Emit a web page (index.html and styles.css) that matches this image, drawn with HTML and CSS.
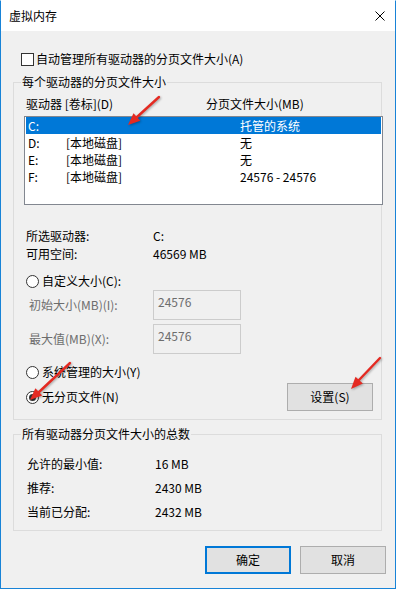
FILE: index.html
```html
<!DOCTYPE html>
<html lang="zh-CN">
<head>
    <meta charset="UTF-8">
    <meta name="viewport" content="width=device-width, initial-scale=1.0">
    <title>虚拟内存</title>
    <link rel="stylesheet" href="styles.css">
</head>
<body>

    <div class="window">
        <!-- Title bar -->
        <div class="titlebar">
            <span class="title">虚拟内存</span>
            <svg class="close" width="10" height="10" viewBox="0 0 10 10">
                <path d="M0.5 0.5 L9.5 9.5 M9.5 0.5 L0.5 9.5" stroke="#000" stroke-width="1" fill="none"/>
            </svg>
        </div>

        <div class="dialog">
            <div class="check-row">
                <span class="checkbox"></span>
                <span>自动管理所有驱动器的分页文件大小(A)</span>
            </div>

            <!-- Per drive -->
            <div class="group drives">
                <div class="group-title">每个驱动器的分页文件大小</div>
                <div class="list-head">
                    <span class="col-drive">驱动器 [卷标](D)</span>
                    <span>分页文件大小(MB)</span>
                </div>
                <div class="listbox">
                    <div class="row selected"><span class="c1">C:</span><span class="c2"></span><span>托管的系统</span></div>
                    <div class="row"><span class="c1">D:</span><span class="c2">[本地磁盘]</span><span>无</span></div>
                    <div class="row"><span class="c1">E:</span><span class="c2">[本地磁盘]</span><span>无</span></div>
                    <div class="row"><span class="c1">F:</span><span class="c2">[本地磁盘]</span><span>24576 - 24576</span></div>
                </div>

                <div class="info">
                    <div class="info-row"><span class="key">所选驱动器:</span><span>C:</span></div>
                    <div class="info-row"><span class="key">可用空间:</span><span>46569 MB</span></div>
                </div>

                <div class="radio-row custom">
                    <span class="radio"></span>
                    <span>自定义大小(C):</span>
                </div>
                <div class="field-row first">
                    <span class="field-label">初始大小(MB)(I):</span>
                    <div class="textbox">24576</div>
                </div>
                <div class="field-row">
                    <span class="field-label">最大值(MB)(X):</span>
                    <div class="textbox">24576</div>
                </div>

                <div class="bottom-row">
                    <div class="radios">
                        <div class="radio-row">
                            <span class="radio"></span>
                            <span>系统管理的大小(Y)</span>
                        </div>
                        <div class="radio-row second">
                            <span class="radio checked"></span>
                            <span>无分页文件(N)</span>
                        </div>
                    </div>
                    <button class="btn set-btn">设置(S)</button>
                </div>
            </div>

            <!-- Totals -->
            <div class="group totals">
                <div class="group-title">所有驱动器分页文件大小的总数</div>
                <div class="total-rows">
                    <div class="total-row"><span class="key">允许的最小值:</span><span>16 MB</span></div>
                    <div class="total-row"><span class="key">推荐:</span><span>2430 MB</span></div>
                    <div class="total-row"><span class="key">当前已分配:</span><span>2432 MB</span></div>
                </div>
            </div>

            <div class="footer">
                <button class="btn default">确定</button>
                <button class="btn">取消</button>
            </div>
        </div>

        <!-- Red annotation arrows -->
        <svg class="arrows" width="396" height="589" viewBox="0 0 396 589">
            <g stroke="#e42a22" stroke-width="2.4" stroke-linecap="round" fill="none">
                <line x1="159" y1="97" x2="137" y2="117"/>
                <line x1="70" y1="363" x2="39" y2="392"/>
                <line x1="380" y1="358" x2="359" y2="380"/>
            </g>
            <g fill="#e42a22">
                <polygon points="128,125 140.3,120.7 133.5,113.3"/>
                <polygon points="30,400 42.2,395.5 35.4,388.2"/>
                <polygon points="351,389 362.9,383.6 355.5,376.8"/>
            </g>
        </svg>
    </div>

</body>
</html>
```

FILE: styles.css
```css
/* General */
body {
    margin: 0;
    font-family: "Microsoft YaHei UI", "Noto Sans CJK SC", sans-serif;
    font-size: 12px;
    line-height: 16px;
    color: #000;
    background: #fff;
}
.window {
    position: relative;
    width: 396px;
    height: 589px;
    box-sizing: border-box;
    border: 1px solid #1883d7;
    border-top-color: #fff;
    background: #f0f0f0;
    display: flex;
    flex-direction: column;
}

/* Title bar */
.titlebar {
    height: 30px;
    flex-shrink: 0;
    background: #fff;
    display: flex;
    align-items: center;
}
.title {
    padding-left: 8px;
    line-height: 30px;
}
.close {
    margin-left: auto;
    margin-right: 10px;
}

/* Dialog body */
.dialog {
    flex: 1;
    padding-top: 20px;
}
.check-row {
    display: flex;
    align-items: center;
    height: 16px;
    padding-left: 20px;
}
.checkbox {
    width: 13px;
    height: 13px;
    box-sizing: border-box;
    border: 1px solid #333;
    background: #fff;
    margin-right: 2px;
}

/* Group boxes */
.group {
    border: 1px solid #dcdcdc;
    margin: 15px 13px 0 12px;
    padding: 0 0 8px 10px;
}
.group-title {
    width: max-content;
    height: 16px;
    margin: -9px 0 0 -3px;
    padding: 0 1px;
    background: #f0f0f0;
}
.totals {
    margin-top: 14px;
    padding-bottom: 6px;
}

/* Drive list */
.list-head {
    display: flex;
    margin-top: 6px;
    padding-left: 2px;
}
.col-drive {
    width: 180px;
}
.listbox {
    margin-top: 4px;
    margin-right: -2px;
    height: 89px;
    box-sizing: border-box;
    border: 1px solid #828790;
    background: #fff;
    padding: 0 1px;
}
.row {
    display: flex;
    height: 17px;
    line-height: 17px;
    padding-left: 2px;
}
.row.selected {
    background: #0078d7;
    color: #fff;
}
.c1 {
    width: 38px;
}
.c2 {
    width: 174px;
}

/* Selected drive info */
.info {
    margin-top: 22px;
}
.info-row {
    display: flex;
    height: 18px;
    line-height: 18px;
    padding-left: 2px;
}
.info-row .key {
    width: 127px;
}

/* Radios */
.radio-row {
    display: flex;
    align-items: center;
    height: 16px;
    padding-left: 2px;
}
.radio-row.custom {
    margin-top: 10px;
}
.radio-row.second {
    margin-top: 9px;
}
.radio {
    position: relative;
    width: 13px;
    height: 13px;
    box-sizing: border-box;
    border: 1px solid #333;
    border-radius: 50%;
    background: #fff;
    margin-right: 3px;
}
.radio.checked::after {
    content: "";
    position: absolute;
    left: 2px;
    top: 2px;
    width: 7px;
    height: 7px;
    border-radius: 50%;
    background: #333;
}

/* Disabled fields */
.field-row {
    display: flex;
    align-items: center;
    margin-top: 4px;
    padding-left: 5px;
    color: #6d6d6d;
}
.field-row.first {
    margin-top: 1px;
}
.field-label {
    width: 124px;
}
.textbox {
    width: 88px;
    height: 30px;
    box-sizing: border-box;
    border: 1px solid #cccccc;
    padding: 3px 0 0 4px;
}

.bottom-row {
    display: flex;
    justify-content: space-between;
    align-items: flex-start;
    margin-top: 10px;
    padding-right: 8px;
}

/* Buttons */
.btn {
    font-family: inherit;
    font-size: 12px;
    line-height: 16px;
    color: #000;
    width: 86px;
    height: 28px;
    box-sizing: border-box;
    border: 1px solid #adadad;
    background: #e1e1e1;
    padding: 0;
}
.set-btn {
    margin-top: 19px;
}
.btn.default {
    border: 2px solid #0078d7;
}

/* Totals */
.total-rows {
    margin-top: 10px;
}
.total-row {
    display: flex;
    height: 24px;
    line-height: 24px;
    padding-left: 3px;
}
.total-row .key {
    width: 128px;
}

.footer {
    display: flex;
    justify-content: flex-end;
    gap: 9px;
    margin-top: 15px;
    padding-right: 9px;
}

/* Annotation overlay */
.arrows {
    position: absolute;
    left: -1px;
    top: -1px;
    pointer-events: none;
    filter: drop-shadow(1px 1px 1px rgba(0, 0, 0, 0.3));
}
```
